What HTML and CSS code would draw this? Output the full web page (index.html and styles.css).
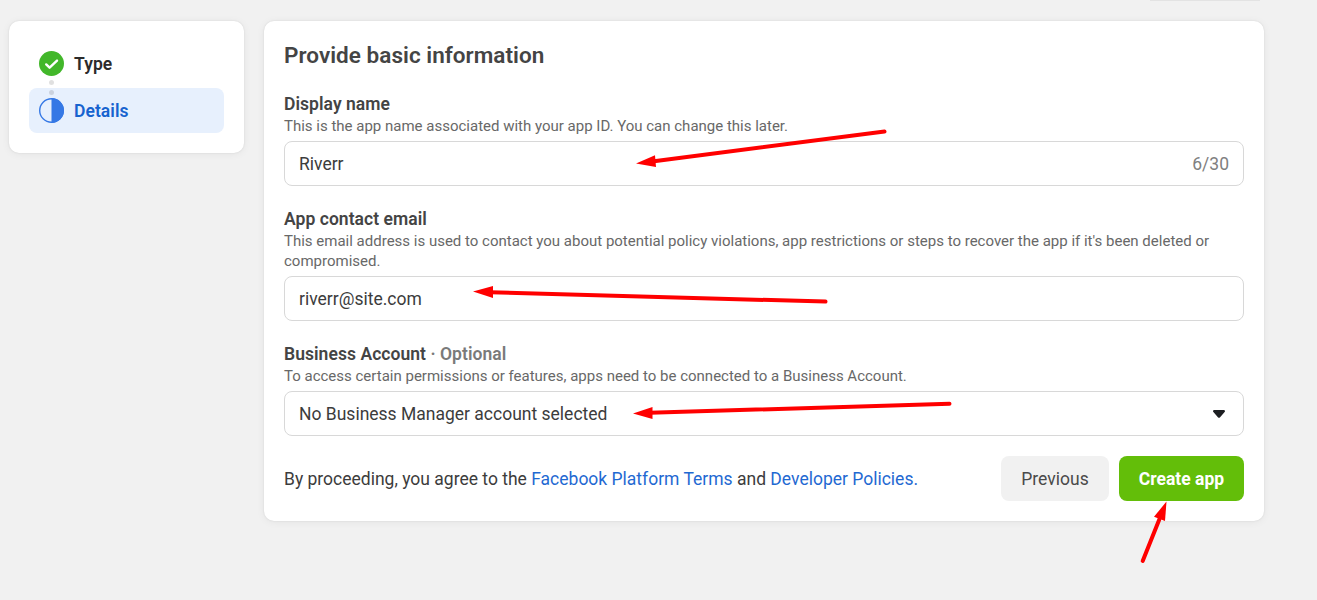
FILE: index.html
```html
<!DOCTYPE html>
<html lang="en">
<head>
<meta charset="utf-8">
<title>Create app</title>
<link rel="stylesheet" href="styles.css">
</head>
<body>
<div class="top-edge"></div>
<div class="layout">
  <nav class="card steps">
    <div class="step">
      <svg class="step-icon" viewBox="0 0 25 25"><circle cx="12.5" cy="12.5" r="12.5" fill="#42b72a"/><path d="M7.2 13.4l3.4 3.3 7.4-7.1" fill="none" stroke="#fff" stroke-width="2.4" stroke-linecap="round" stroke-linejoin="round"/></svg>
      <span>Type</span>
    </div>
    <div class="step step-active">
      <svg class="step-icon" viewBox="0 0 25 25"><circle cx="12.5" cy="12.5" r="11.8" fill="none" stroke="#3578e5" stroke-width="1.4"/><path d="M12.5 0a12.5 12.5 0 0 1 0 25z" fill="#3578e5"/></svg>
      <span>Details</span>
    </div>
    <i class="dot dot-one"></i><i class="dot dot-two"></i>
  </nav>
  <main class="card form">
    <h1 class="title">Provide basic information</h1>
    <section class="field">
      <h2 class="label">Display name</h2>
      <p class="help">This is the app name associated with your app ID. You can change this later.</p>
      <div class="input"><span>Riverr</span><span class="count">6/30</span></div>
    </section>
    <section class="field">
      <h2 class="label">App contact email</h2>
      <p class="help">This email address is used to contact you about potential policy violations, app restrictions or steps to recover the app if it's been deleted or<br>compromised.</p>
      <div class="input"><span>riverr@site.com</span></div>
    </section>
    <section class="field">
      <h2 class="label">Business Account <span class="optional">· Optional</span></h2>
      <p class="help">To access certain permissions or features, apps need to be connected to a Business Account.</p>
      <div class="input"><span>No Business Manager account selected</span><svg class="caret" viewBox="0 0 12 8"><path d="M1.3 0h9.4q1.3 0 1.3 1.2 0 .6-.6 1.1L7.1 7.2Q6 8.2 4.9 7.2L.6 2.3Q0 1.800 0 1.200 0 0 1.300 0z" fill="#1c1e21"/></svg></div>
    </section>
    <footer class="footer">
      <p class="terms">By proceeding, you agree to the <a class="link">Facebook Platform Terms</a> and <a class="link">Developer Policies.</a></p>
      <button class="button previous">Previous</button>
      <button class="button create">Create app</button>
    </footer>
  </main>
</div>
<svg class="arrows" viewBox="0 0 1317 600">
  <g stroke="red" stroke-width="4" stroke-linecap="round">
    <path d="M884.500 131.500L654 161.300"/><path d="M825.500 301.600L490 292.300"/><path d="M949.500 403.700L650 412.800"/><path d="M1142.700 561L1159.500 519"/>
  </g>
  <g fill="red"><path d="M636 163.500L655 155.200L656 167z"/><path d="M473 291.500L493 286v12z"/><path d="M633 413.500L652.500 407v12z"/><path d="M1166.500 501.500L1154 516.800l11 4.200z"/></g>
</svg>
</body>
</html>
```
FILE: styles.css
```css
* { box-sizing: border-box; }
body { margin: 0; height: 600px; overflow: hidden; background: #f1f1f1; color: #3c3c3c; font: 400 17.5px/22px Roboto, "Liberation Sans", sans-serif; }
h1, h2, p { margin: 0; }
.top-edge { width: 110px; height: 1px; margin-left: 1150px; background: #e3e3e3; }
.layout { display: flex; align-items: flex-start; gap: 20px; padding: 20px 0 0 9px; }
.card { background: #fff; border-radius: 10px; box-shadow: 0 0 2px rgba(0,0,0,.1), 0 1px 8px rgba(0,0,0,.06); }
.steps { position: relative; width: 235px; height: 132px; padding: 20px; }
.step { display: flex; align-items: center; gap: 10px; height: 45px; padding-left: 10px; border-radius: 8px; color: #2b2b2b; font-weight: 600; letter-spacing: .05px; }
.step + .step { margin-top: 2px; }
.step-active { background: #e7f0fd; color: #1763cf; }
.step-icon { width: 25px; height: 25px; }
.dot { position: absolute; left: 40px; width: 5px; height: 5px; border-radius: 50%; background: rgba(0,0,0,.12); }
.dot-one { top: 59px; }
.dot-two { top: 69px; }
.form { width: 1000px; height: 500px; padding: 20px; }
.title { height: 52px; font-size: 22.5px; line-height: 29px; font-weight: 600; letter-spacing: .04px; color: #444; }
.field { margin-bottom: 22px; }
.label { font-size: 17.5px; line-height: 22px; margin-bottom: 1px; font-weight: 600; letter-spacing: .05px; color: #444; }
.optional { color: #7a7a7a; }
.help { font-size: 15px; line-height: 20px; color: #686868; }
.input { display: flex; align-items: center; justify-content: space-between; height: 45px; margin-top: 5px; padding: 0 14px; border: 1px solid #d8d8d8; border-radius: 8px; }
.count { color: #808080; }
.caret { width: 12px; height: 8px; margin-right: 4px; }
.footer { display: flex; align-items: center; gap: 10px; margin-top: -2px; }
.terms { flex: 1; }
.link { color: #1f69d2; }
.button { height: 45px; padding: 0; border: 0; border-radius: 8px; font: inherit; color: #4a4a4a; background: #f1f1f1; }
.previous { width: 108px; }
.create { width: 125px; color: #fff; background: #63be09; font-weight: 700; }
.arrows { position: absolute; inset: 0; width: 1317px; height: 600px; pointer-events: none; }
```
